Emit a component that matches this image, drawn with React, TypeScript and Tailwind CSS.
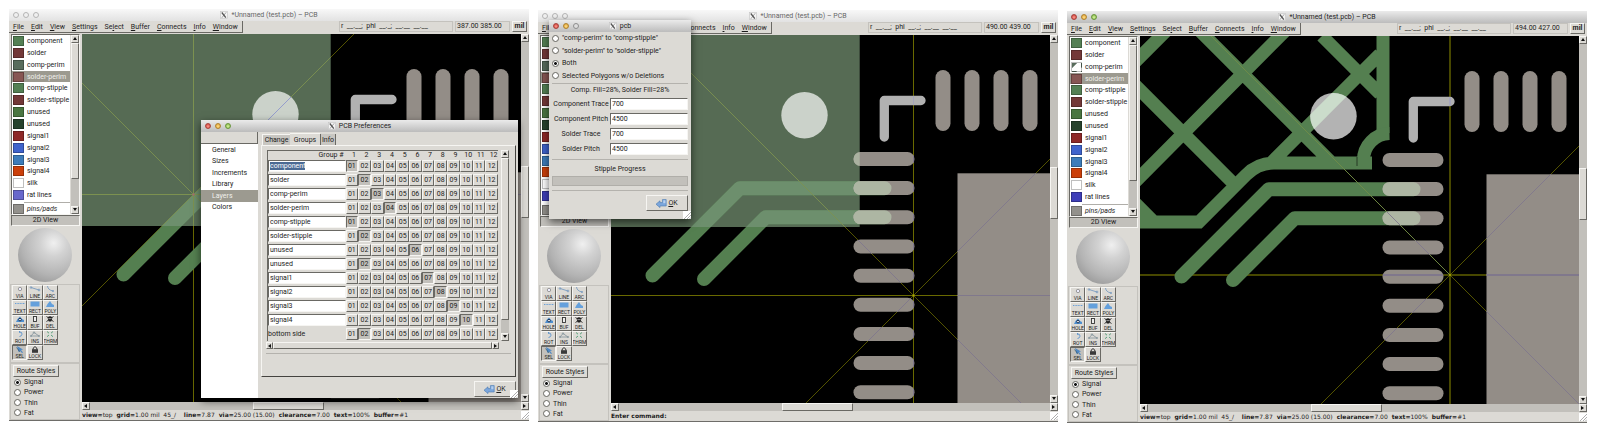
import { useEffect, useId, useRef, type ReactNode } from 'react';
import clsx from 'clsx';

const RAISED = 'border border-t-[#f6f5f2] border-l-[#f6f5f2] border-r-[#6a6964] border-b-[#6a6964] bg-[#dcdad5]';
const SUNKEN = 'border border-t-[#6a6964] border-l-[#6a6964] border-r-[#f6f5f2] border-b-[#f6f5f2]';
const GROOVE = 'border border-[#c4c2bd]';

/* ---------- title bar ---------- */

function TrafficLights({ lit }: { lit: 'all' | 'two' | 'none' }) {
  const base = 'size-[6px] rounded-full border';
  const off = 'border-[#b4b4b4] bg-[#f0f0f0]';
  return (
    <div className="flex gap-1">
      <span className={clsx(base, lit === 'none' ? off : 'border-[#a8403a] bg-[radial-gradient(circle_at_50%_60%,#ff9a90,#c8372e)]')} />
      <span className={clsx(base, lit === 'none' ? off : 'border-[#b0822c] bg-[radial-gradient(circle_at_50%_60%,#ffe08a,#dc9a2c)]')} />
      <span className={clsx(base, lit === 'all' ? 'border-[#68963a] bg-[radial-gradient(circle_at_50%_60%,#d8f5a0,#7cb040)]' : lit === 'two' ? 'border-[#8e8e8e] bg-[#dedede]' : off)} />
    </div>
  );
}

function XIcon() {
  return (
    <svg viewBox="0 0 8 8" className="size-2" aria-hidden="true">
      <rect x=".5" y=".5" width="7" height="7" fill="#f4f4f4" stroke="#c4c4c4" strokeWidth=".6" />
      <path d="M1.8 1.5 5.8 6.6" stroke="#555" strokeWidth="1.3" />
      <path d="M6.2 1.3 1.8 6.8" stroke="#555" strokeWidth=".5" />
    </svg>
  );
}

function TitleBar({ title, lit, tone }: { title: string; lit: 'all' | 'two' | 'none'; tone: 'active' | 'idle' }) {
  return (
    <div
      className={clsx(
        'grid h-3 shrink-0 grid-cols-[1fr_auto_1fr] items-center px-1 leading-[12px]',
        tone === 'active' ? 'bg-linear-to-b from-[#ebebeb] to-[#bcbcbc] text-[#222]' : 'bg-linear-to-b from-[#f8f8f8] to-[#e2e2e2] text-[#666]',
      )}
    >
      <TrafficLights lit={lit} />
      <div className="flex items-center gap-[3px] whitespace-nowrap">
        <XIcon />
        <span>{title}</span>
      </div>
    </div>
  );
}

/* ---------- scroll bars ---------- */

const ARROWS = { up: 'M2 0 4 3H0Z', down: 'M0 0H4L2 3Z', left: 'M3 0V4L0 2Z', right: 'M0 0V4L3 2Z' };

function Arrow({ dir, size = 8 }: { dir: keyof typeof ARROWS; size?: 7 | 8 }) {
  return (
    <button
      aria-label={'Scroll ' + dir}
      className={clsx('flex shrink-0 items-center justify-center', RAISED, size === 8 ? 'size-2' : 'size-[7px]')}
    >
      <svg viewBox="0 0 4 4" className="size-1" aria-hidden="true">
        <path d={ARROWS[dir]} fill="#111" />
      </svg>
    </button>
  );
}

function VScroll({ thumb, className }: { thumb: string; className?: string }) {
  return (
    <div className={clsx('flex w-2 shrink-0 flex-col bg-[#c2c0bb]', className)}>
      <Arrow dir="up" />
      <div className="flex min-h-0 flex-1 flex-col">
        <div className={clsx(RAISED, thumb)} />
      </div>
      <Arrow dir="down" />
    </div>
  );
}

/* ---------- menu bar ---------- */

const MENUS: [string, string, string][] = [
  ['', 'F', 'ile'],
  ['', 'E', 'dit'],
  ['', 'V', 'iew'],
  ['', 'S', 'ettings'],
  ['Se', 'l', 'ect'],
  ['', 'B', 'uffer'],
  ['', 'C', 'onnects'],
  ['', 'I', 'nfo'],
  ['', 'W', 'indow'],
];

function MenuBar({ coords }: { coords: string }) {
  return (
    <div className="flex h-[13px] shrink-0 items-start justify-between bg-[#dcdad5]">
      <nav className="flex h-3 items-center gap-[7px] border-r border-b border-[#6a6964] pr-1 pl-1">
        {MENUS.map(([pre, key, post]) => (
          <button key={pre + key + post} className="whitespace-nowrap">
            {pre}
            <span className="underline">{key}</span>
            {post}
          </button>
        ))}
      </nav>
      <div className="flex gap-[2px] pr-[2px] leading-[9px]">
        <div className={clsx('w-[114px] pl-[1px] whitespace-pre', GROOVE)}>{'r  __.__;  phi  __._;  __.__  __.__'}</div>
        <div className={clsx('w-[55px] pl-[1px]', GROOVE)}>{coords}</div>
        <button className={clsx('w-[15px] font-bold', RAISED)}>mil</button>
      </div>
    </div>
  );
}

/* ---------- side bar ---------- */

type Layer = { name: string; color: string };

const LAYERS: Layer[] = [
  { name: 'component', color: 'bg-[#548054]' },
  { name: 'solder', color: 'bg-[#733838]' },
  { name: 'comp-perim', color: 'bg-[#586c5c]' },
  { name: 'solder-perim', color: 'bg-[#875653]' },
  { name: 'comp-stipple', color: 'bg-[#548054]' },
  { name: 'solder-stipple', color: 'bg-[#733838]' },
  { name: 'unused', color: 'bg-[#4a7641]' },
  { name: 'unused', color: 'bg-[#26422c]' },
  { name: 'signal1', color: 'bg-[#8e2828]' },
  { name: 'signal2', color: 'bg-[#3f63cc]' },
  { name: 'signal3', color: 'bg-[#3d7cba]' },
  { name: 'signal4', color: 'bg-[#cb3f0a]' },
  { name: 'silk', color: 'bg-white' },
];

function LayerRow({ name, color, selected }: Layer & { selected?: boolean }) {
  return (
    <button className={clsx('flex min-h-0 flex-1 items-center gap-[3px] pl-[1px] text-left', selected && 'bg-[#9c9a90] text-[#f0f0ec]')}>
      <span className={clsx('h-[10px] w-[11px] shrink-0 border border-black/25', color)} />
      <span className="whitespace-nowrap">{name}</span>
    </button>
  );
}

function LayerList({ ratColor, perimHidden }: { ratColor: string; perimHidden?: boolean }) {
  return (
    <div className={clsx('ml-[2px] flex h-[181px] overflow-hidden', SUNKEN)}>
      <div className="flex min-w-0 flex-1 flex-col overflow-hidden bg-white">
        <div className="flex h-[166px] shrink-0 flex-col">
          {LAYERS.map((l, i) => (
            <LayerRow
              key={i}
              name={l.name}
              color={perimHidden && l.name === 'comp-perim' ? 'bg-[linear-gradient(135deg,#586c5c_28%,#fff_32%)]' : l.color}
              selected={l.name === 'solder-perim'}
            />
          ))}
          <LayerRow name="rat lines" color={ratColor} />
        </div>
        <div className="ml-3 h-[2px] shrink-0 border-b border-[#b0aea9]" />
        <div className="flex h-[11px] shrink-0 italic">
          <LayerRow name="pins/pads" color="bg-[#93918c]" />
        </div>
      </div>
      <VScroll thumb="h-[136px]" className="ml-[1px]" />
    </div>
  );
}

const TOOLS: { label: string; icon: ReactNode }[] = [
  { label: 'VIA', icon: <circle cx="6" cy="3" r="1.7" fill="#eef" stroke="#888" strokeWidth=".8" /> },
  {
    label: 'LINE',
    icon: (
      <g fill="none" stroke="#7a9cc0" strokeWidth=".9">
        <path d="M2 1.5 10 4" />
        <circle cx="2" cy="1.5" r=".8" />
        <circle cx="10" cy="4" r=".9" />
      </g>
    ),
  },
  {
    label: 'ARC',
    icon: (
      <g fill="none" stroke="#7a9cc0" strokeWidth=".9">
        <path d="M3.5 0Q4 4 9 5" />
        <circle cx="9" cy="5" r=".7" />
      </g>
    ),
  },
  { label: 'TEXT', icon: <path d="M1 2.5H11" stroke="#6aa0d8" strokeWidth="1.2" strokeDasharray="1 .6" /> },
  { label: 'RECT', icon: <rect x="1.5" y=".5" width="9" height="5" fill="#64a0dc" /> },
  { label: 'POLY', icon: <path d="M2 6 3.5 3 6 0 8 3 10 4V6Z" fill="#64a0dc" /> },
  {
    label: 'HOLE',
    icon: (
      <g>
        <path d="M2 6 3.5 3 6 .5 8 3 10 4V6Z" fill="#4f90d0" />
        <circle cx="6" cy="3.6" r="1.3" fill="#fff" stroke="#124" strokeWidth=".9" />
      </g>
    ),
  },
  { label: 'BUF', icon: <rect x="4.5" y=".5" width="3" height="5" fill="#eee" stroke="#333" strokeWidth=".9" /> },
  {
    label: 'DEL',
    icon: (
      <g>
        <path d="M2.5.5 9.5 5.5M9.5.5 2.5 5.5" stroke="#222" strokeWidth=".9" />
        <path d="M6 .2C8 .2 8.6 2 8 3.5L7.2 5.6H4.8L4 3.5C3.4 2 4 .2 6 .2Z" fill="#222" />
        <circle cx="5.1" cy="2.6" r=".6" fill="#ddd" />
        <circle cx="6.9" cy="2.6" r=".6" fill="#ddd" />
      </g>
    ),
  },
  { label: 'ROT', icon: <path d="M5 .8Q8.5 1 8 3.2T5.5 5.5M5 .8l1.2-.8M5 .8l1.2.9" fill="none" stroke="#5a92cc" strokeWidth=".9" /> },
  {
    label: 'INS',
    icon: (
      <g fill="none" stroke="#8a9aa0" strokeWidth=".9">
        <path d="M2 5 5 1.5 10 5Z" />
        <circle cx="5" cy="1.5" r=".7" />
        <circle cx="10" cy="5" r=".7" />
        <circle cx="2" cy="5" r=".7" />
      </g>
    ),
  },
  {
    label: 'THRM',
    icon: (
      <g stroke="#4a9a72" strokeWidth=".9">
        <path d="M3 .5 5 2.2M9 .5 7 2.2M3 5.7 5 4M9 5.7 7 4" />
        <circle cx="6" cy="3.1" r="1" fill="#cfe6da" stroke="none" />
      </g>
    ),
  },
  {
    label: 'SEL',
    icon: (
      <g>
        <path d="M3 0 9 3.5 7 4 9 6.5 8 7 6 4.8 4.5 6Z" fill="#4f88c4" />
        <path d="M2.5 1.5 6 6" stroke="#245" strokeWidth=".6" />
      </g>
    ),
  },
  {
    label: 'LOCK',
    icon: (
      <g>
        <path d="M4.2 3.5V2Q6-.8 7.8 2V3.5" fill="none" stroke="#333" strokeWidth="1" />
        <rect x="3" y="3.2" width="6" height="3.6" fill="#3a3a3a" />
      </g>
    ),
  },
];

function ToolPalette() {
  return (
    <div className={clsx('ml-[1px] h-[79px] px-[1px]', GROOVE)}>
      <div className="grid w-[46px] grid-cols-3">
        {TOOLS.map((t) => (
          <button
            key={t.label}
            className={clsx('flex h-[15px] flex-col items-center overflow-hidden', t.label === 'SEL' ? clsx(SUNKEN, 'bg-[#c2c0bb]') : RAISED)}
          >
            <svg viewBox="0 0 12 7" className="h-[7px] w-3 shrink-0" aria-hidden="true">
              {t.icon}
            </svg>
            <span className="text-[5px] leading-[6px] text-[#222]">{t.label}</span>
          </button>
        ))}
      </div>
    </div>
  );
}

function Radio({ name, label, checked, className }: { name: string; label: string; checked?: boolean; className: string }) {
  return (
    <label className={clsx('flex items-center whitespace-nowrap', className)}>
      <input
        type="radio"
        name={name}
        defaultChecked={checked}
        className="size-[7px] shrink-0 appearance-none rounded-full border border-[#66655f] bg-white checked:bg-[radial-gradient(circle,#111_35%,#fff_45%)]"
      />
      {label}
    </label>
  );
}

function RouteStyles() {
  const group = useId();
  return (
    <div className={clsx('ml-[1px] flex-1 pt-[1px] pl-[2px]', GROOVE)}>
      <button className={clsx('h-3 w-[46px] leading-[10px] whitespace-nowrap', RAISED)}>Route Styles</button>
      <div className="flex h-[41px] flex-col pl-[1px]">
        {['Signal', 'Power', 'Thin', 'Fat'].map((s) => (
          <Radio key={s} name={group} label={s} checked={s === 'Signal'} className="flex-1 gap-[3px]" />
        ))}
      </div>
    </div>
  );
}

function SideBar({ ratColor, perimHidden }: { ratColor: string; perimHidden?: boolean }) {
  return (
    <aside className="flex w-[73px] shrink-0 flex-col pr-[2px]">
      <LayerList ratColor={ratColor} perimHidden={perimHidden} />
      <div className={clsx('ml-[2px] h-[11px] bg-[#c2c0bb] text-center leading-[9px]', SUNKEN)}>2D View</div>
      <div className="flex h-[58px] items-center justify-center">
        <div className="size-[54px] rounded-full bg-[radial-gradient(circle_at_66%_28%,#f0f0f0,#d2d2d2_25%,#b4b4b4_60%,#858585)]" />
      </div>
      <ToolPalette />
      <RouteStyles />
    </aside>
  );
}

/* ---------- board drawing ---------- */

const VPADS = [332, 361, 390, 419];
const HPADS = [124, 153, 182.3, 211.5, 240.7, 269.8, 299, 328, 357.2];

function Pads() {
  return (
    <>
      {VPADS.map((x) => (
        <rect key={x} x={x - 7.5} y="35" width="15" height="61" rx="7.5" />
      ))}
      {HPADS.map((y) => (
        <rect key={y} x="242.5" y={y - 7} width="61" height="14" rx="7" />
      ))}
      <rect x="346.5" y="138.3" width="200" height="400" />
    </>
  );
}

const TRACES = 'M41.5 240.5 128.8 153.2H273.5M93 244 154.7 182.3H273.5';
const STIPPLE =
  'M0 186H59L106 139Q118 127 134 127H232M243 0V97M-10-75 150 85M65 0 190 125M-10 44 97 151M182 0 240 58M-10 162 16 188M30-9-10 31M150-10-10 151M240 18 131 127';

function Board({ cross, stipple, bold }: { cross: [number, number]; stipple?: boolean; bold?: boolean }) {
  const id = useId();
  const [cx, cy] = cross;
  const axis = 'M-600 ' + cy + 'H1200M' + cx + '-600V1200';
  const diag = `M${cx - 600} ${cy - 600}l1200 1200M${cx + 600} ${cy - 600}l-1200 1200`;
  const w = bold ? 2 : 1;
  const rays = (a: string, d: string) => (
    <g fill="none">
      <path d={axis} stroke={a} strokeWidth={w} />
      <path d={diag} stroke={d} strokeWidth=".9" />
    </g>
  );
  return (
    <svg viewBox="0 0 439 368" preserveAspectRatio="xMinYMin slice" className="h-[368px] min-w-0 flex-1 bg-black" role="img" aria-label="Board layout">
      <defs>
        <clipPath id={id + 'poly'}>
          <rect width="248.7" height="192" />
        </clipPath>
        <clipPath id={id + 'pads'}>
          <Pads />
        </clipPath>
        <clipPath id={id + 'disc'}>
          <circle cx="193.5" cy="80.2" r="23.2" />
        </clipPath>
      </defs>
      {rays(bold ? '#474700' : '#696900', '#5c5c00')}
      {stipple ? (
        <g fill="none" stroke="#547f50">
          <path d={STIPPLE} strokeWidth="13" />
          <path d="M249.5 97.5A26.5 26.5 0 0 0 223.5 124V133" strokeWidth="13" />
          <path d="M217 121V130" stroke="#1c2a1b" strokeWidth=".8" />
        </g>
      ) : (
        <rect width="248.7" height="192" fill="#566b54" />
      )}
      <path d={TRACES} fill="none" stroke="#547f50" strokeWidth="14" strokeLinecap="round" strokeLinejoin="round" />
      {!stipple && (
        <g clipPath={`url(#${id}poly)`}>
          <path d={TRACES} fill="none" stroke="#6d8f6d" strokeWidth="14" strokeLinecap="round" strokeLinejoin="round" />
          {rays('#7c9150', '#7c9150')}
        </g>
      )}
      {stipple && <path d={`M${cx} ${cy}L${cx - 300} ${cy - 300}`} stroke="#728c48" strokeWidth=".9" />}
      <g fill="#938d87">
        <Pads />
      </g>
      <g clipPath={`url(#${id}pads)`}>
        {!stipple && <rect width="248.7" height="192" fill="#aab1a0" />}
        <path d={TRACES} fill="none" stroke="#adb6a3" strokeWidth="14" strokeLinecap="round" />
        {rays('#80788c', '#80788c')}
      </g>
      <circle cx="193.5" cy="80.2" r="23.2" fill={stipple ? '#b3b3b3' : '#cbd2ca'} />
      <g clipPath={`url(#${id}disc)`}>
        {stipple && <path d="M280-22 80 178" stroke="#cbdccb" strokeWidth="13" />}
        {!stipple && rays('#8f96cc', '#8f96cc')}
      </g>
      <path d="M273.3 102V65.5H310" fill="none" stroke="#b1b1b1" strokeWidth="9.3" strokeLinecap="round" strokeLinejoin="round" />
      {!stipple && cx > 273 && <path d={`M${cx} 61V70`} stroke="#a4a4bc" />}
      {stipple && <path d="M310 61V70" stroke="#a4a4bc" strokeWidth="2" />}
      <circle cx={cx} cy={cy} r="1" fill={cx < 200 ? '#b0607c' : '#b0b000'} />
    </svg>
  );
}

/* ---------- editor window ---------- */

function Grip() {
  return (
    <svg viewBox="0 0 8 8" className="size-2 bg-white" aria-hidden="true">
      <path d="M8 1 1 8M8 4 4 8M8 6.5 6.5 8" stroke="#999" strokeWidth=".8" />
    </svg>
  );
}

function StatusLine() {
  const items: [string, string][] = [
    ['view', 'top'],
    ['grid', '1.00 mil  45_/  '],
    ['line', '7.87'],
    ['via', '25.00 (15.00)'],
    ['clearance', '7.00'],
    ['text', '100%'],
    ['buffer', '#1'],
  ];
  return (
    <div className="flex gap-1 whitespace-pre">
      {items.map(([k, v]) => (
        <span key={k}>
          <b>{k}=</b>
          {v}
        </span>
      ))}
    </div>
  );
}

type EditorProps = {
  className: string;
  lit: 'all' | 'none';
  coords: string;
  ratColor: string;
  perimHidden?: boolean;
  board: ReactNode;
  status: ReactNode;
  children?: ReactNode;
};

function EditorWindow({ className, lit, coords, ratColor, perimHidden, board, status, children }: EditorProps) {
  return (
    <section className={clsx('relative flex min-w-0 flex-1 flex-col border-b border-[#6e6d69] bg-[#dcdad5]', className)}>
      <TitleBar title="*Unnamed (test.pcb) – PCB" lit={lit} tone={lit === 'all' ? 'active' : 'idle'} />
      <MenuBar coords={coords} />
      <div className="flex">
        <SideBar ratColor={ratColor} perimHidden={perimHidden} />
        <div className="flex min-w-0 flex-1 flex-col">
          <div className="flex">
            {board}
            <div className="flex w-2 shrink-0 flex-col bg-[#c2c0bb]">
              <Arrow dir="up" />
              <div className="flex-[125]" />
              <div className={clsx('flex-[50]', RAISED)} />
              <div className="flex-[177]" />
              <Arrow dir="down" />
            </div>
          </div>
          <div className="flex bg-[#c2c0bb]">
            <Arrow dir="left" />
            <div className="flex-[164]" />
            <div className={clsx('flex-[69]', RAISED)} />
            <div className="flex-[198]" />
            <Arrow dir="right" />
          </div>
          <div className="flex h-[10px] items-center justify-between font-['DejaVu_Sans',sans-serif] text-[6px]">
            {status}
            <Grip />
          </div>
        </div>
      </div>
      {children}
    </section>
  );
}

function OkButton() {
  return (
    <button className={clsx('flex h-4 w-[42px] items-center justify-center gap-[1px]', RAISED)}>
      <svg viewBox="0 0 11 9" className="h-[9px] w-[11px]" aria-hidden="true">
        <path d="M0 5.2 4 1.8V3.6H6.4V.6H10.2V7H4V8.6Z" fill="#7ba6dc" stroke="#4a78b0" strokeWidth=".6" />
        <path d="M7.3 1.3H9.4V4.2H7.3Z" fill="#b8d0ee" />
      </svg>
      <span>
        <span className="underline">O</span>K
      </span>
    </button>
  );
}

/* ---------- preferences dialog ---------- */

const GROUPS: [string, number][] = [
  ['component', 1],
  ['solder', 2],
  ['comp-perim', 3],
  ['solder-perim', 4],
  ['comp-stipple', 1],
  ['solder-stipple', 2],
  ['unused', 6],
  ['unused', 2],
  ['signal1', 7],
  ['signal2', 8],
  ['signal3', 9],
  ['signal4', 10],
  ['bottom side', 2],
];
const COLS = Array.from({ length: 12 }, (_, i) => i + 1);

function GroupTable() {
  const first = useRef<HTMLInputElement>(null);
  useEffect(() => {
    first.current?.focus({ preventScroll: true });
    first.current?.select();
  }, []);
  return (
    <table className="w-full table-fixed border-collapse border-t border-l border-[#6a6964]">
      <colgroup>
        <col className="w-[78px]" />
        {COLS.map((c) => (
          <col key={c} />
        ))}
      </colgroup>
      <thead>
        <tr className="h-2 leading-[8px]">
          <th className="p-0 pr-[2px] text-right font-normal">Group #</th>
          {COLS.map((c) => (
            <th key={c} className="p-0 pl-1 text-center font-normal">
              {c}
            </th>
          ))}
        </tr>
      </thead>
      <tbody>
        {GROUPS.map(([name, on], r) => (
          <tr key={r} className="h-[14px]">
            <td className="p-0">
              {r === GROUPS.length - 1 ? (
                <span className="block leading-[12px]">{name}</span>
              ) : (
                <input
                  ref={r === 0 ? first : undefined}
                  aria-label={'Layer ' + (r + 1) + ' name'}
                  defaultValue={name}
                  className={clsx('block h-3 w-full rounded-none bg-white pl-[1px] leading-[10px] outline-none selection:bg-[#4b6a93] selection:text-white', SUNKEN)}
                />
              )}
            </td>
            {COLS.map((c) => (
              <td key={c} className="p-0">
                <button
                  aria-pressed={c === on}
                  className={clsx('block h-3 w-full text-center leading-[10px]', c === on ? clsx(SUNKEN, 'bg-[#c2c0bb]') : RAISED)}
                >
                  {String(c).padStart(2, '0')}
                </button>
              </td>
            ))}
          </tr>
        ))}
      </tbody>
    </table>
  );
}

function Preferences() {
  return (
    <div
      role="dialog"
      aria-label="PCB Preferences"
      className="absolute top-[111px] left-[192px] flex w-[317px] flex-col bg-[#dcdad5] shadow-[0_3px_8px_rgba(0,0,0,0.6)]"
    >
      <TitleBar title="PCB Preferences" lit="all" tone="active" />
      <div className="flex h-[266px]">
        <div className="flex w-[57px] shrink-0 flex-col bg-white">
          <div className="h-3 border-r border-b border-[#6a6964] bg-[#dcdad5]" />
          <div className="flex h-[69px] flex-col">
            {['General', 'Sizes', 'Increments', 'Library', 'Layers', 'Colors'].map((n) => (
              <button key={n} className={clsx('min-h-0 flex-1 pl-[11px] text-left', n === 'Layers' && 'bg-[#9c9a90] text-[#f0f0ec]')}>
                {n}
              </button>
            ))}
          </div>
        </div>
        <div className="flex min-w-0 flex-1 flex-col pl-[3px]">
          <div role="tablist" className="flex items-end pt-[1px] pl-[1px] leading-[10px]">
            <button role="tab" className="h-[11px] w-7 border-t border-l border-[#f6f5f2] bg-[#c8c6c1] text-center">Change</button>
            <button role="tab" aria-selected="true" className="h-3 w-[30px] border-t border-[#f6f5f2] bg-[#dcdad5] text-center">Groups</button>
            <button role="tab" className="h-[11px] w-4 border-r border-l border-[#6a6964] bg-[#c8c6c1] text-center">Info</button>
          </div>
          <div className="mr-[2px] flex-1 border border-t-[#f6f5f2] border-l-[#f6f5f2] border-r-[#44433f] border-b-[#44433f] px-1 pt-1">
            <div className="flex gap-[3px] pr-[2px] pl-[1px]">
              <div className="min-w-0 flex-1">
                <GroupTable />
              </div>
              <VScroll thumb="h-[162px]" />
            </div>
            <div className="mt-[1px] mr-3 flex bg-[#c2c0bb]">
              <Arrow dir="left" size={7} />
              <div className={clsx('flex-1', RAISED)} />
              <Arrow dir="right" size={7} />
            </div>
            <div className="mt-1 border-t border-[#b4b2ad]" />
          </div>
          <div className="mt-1 mb-[1px] flex justify-end pr-[2px]">
            <OkButton />
          </div>
        </div>
      </div>
      <div className="absolute right-0 bottom-0">
        <Grip />
      </div>
    </div>
  );
}

/* ---------- stipple dialog ---------- */

const RULE = 'border-t border-[#b4b2ad]';

function StippleDialog() {
  const id = useId();
  const fields: [string, string][] = [
    ['Component Trace', '700'],
    ['Component Pitch', '4500'],
    ['Solder Trace', '700'],
    ['Solder Pitch', '4500'],
  ];
  return (
    <div
      role="dialog"
      aria-label="pcb"
      className="absolute top-[10px] left-[11px] flex w-[142px] flex-col bg-[#dcdad5] shadow-[0_3px_8px_rgba(0,0,0,0.6)]"
    >
      <TitleBar title="pcb" lit="two" tone="active" />
      <div className="flex flex-col px-[3px] pb-2">
        <div className="flex h-[50px] flex-col">
          {['"comp-perim" to "comp-stipple"', '"solder-perim" to "solder-stipple"', 'Both', 'Selected Polygons w/o Deletions'].map((l) => (
            <Radio key={l} name={id} label={l} checked={l === 'Both'} className="flex-1 gap-[3px]" />
          ))}
        </div>
        <div className={clsx('mt-[1px]', RULE)} />
        <p className="h-3 text-center leading-[12px]">Comp. Fill=28%, Solder Fill=28%</p>
        <div className="flex h-[61px] flex-col">
          {fields.map(([l, v], i) => (
            <div key={l} className="flex flex-1 items-center">
              <label htmlFor={id + i} className="w-[58px] text-center whitespace-nowrap">
                {l}
              </label>
              <input id={id + i} defaultValue={v} className={clsx('h-3 w-0 flex-1 rounded-none bg-white pl-[1px] outline-none', SUNKEN)} />
            </div>
          ))}
        </div>
        <div className={clsx('mt-[2px]', RULE)} />
        <p className="mt-[3px] h-3 text-center leading-[12px]">Stipple Progress</p>
        <div role="progressbar" aria-valuenow={0} className="mt-[1px] h-[10px] border border-[#b0aea9] bg-[#c2c0bb]" />
        <div className={clsx('mt-1', RULE)} />
        <div className="mt-1 flex justify-end">
          <OkButton />
        </div>
      </div>
      <div className="absolute right-0 bottom-0">
        <Grip />
      </div>
    </div>
  );
}

/* ---------- page ---------- */

export default function App() {
  return (
    <main className="flex min-h-screen items-start gap-[9px] bg-white pr-[13px] pl-[9px] font-['Roboto',sans-serif] text-[7px] leading-[10px] text-[#1c1c1c]">
      <EditorWindow className="mt-[9px]" lit="none" coords="387.00 385.00" ratColor="bg-[#6868cc]" board={<Board cross={[111.5, 160.5]} />} status={<StatusLine />}>
        <Preferences />
      </EditorWindow>
      <EditorWindow
        className="mt-[10px]"
        lit="none"
        coords="490.00 439.00"
        ratColor="bg-[#3e3eb8]"
        board={<Board cross={[302.5, 260.5]} />}
        status={<b>Enter command:</b>}
      >
        <StippleDialog />
      </EditorWindow>
      <EditorWindow
        className="mt-[11px]"
        lit="all"
        coords="494.00 427.00"
        ratColor="bg-[#3e3eb8]"
        perimHidden
        board={<Board cross={[310, 239]} stipple bold />}
        status={<StatusLine />}
      />
    </main>
  );
}
